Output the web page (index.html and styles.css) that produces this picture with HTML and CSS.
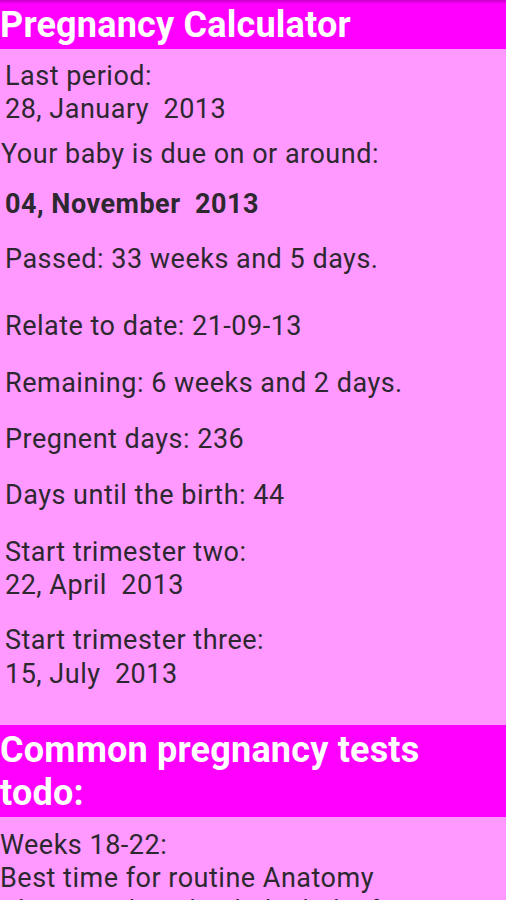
FILE: index.html
```html
<!DOCTYPE html>
<html lang="en">
<head>
    <meta charset="UTF-8">
    <meta name="viewport" content="width=device-width, initial-scale=1.0">
    <title>Pregnancy Calculator</title>
    <link rel="stylesheet" href="styles.css">
</head>
<body>
<div class="title-bar">Pregnancy Calculator</div>
<div class="content">
    <div class="block period">
        <div>Last period:</div>
        <div class="date">28, January  2013</div>
    </div>
    <div class="due-label">Your baby is due on or around:</div>
    <div class="block due-date">04, November  2013</div>
    <div class="block passed">Passed: 33 weeks and 5 days.</div>
    <div class="block relate">Relate to date: 21-09-13</div>
    <div class="block stat">Remaining: 6 weeks and 2 days.</div>
    <div class="block stat">Pregnent days: 236</div>
    <div class="block stat">Days until the birth: 44</div>
    <div class="block stat">
        <div>Start trimester two:</div>
        <div class="date">22, April  2013</div>
    </div>
    <div class="block trimester">
        <div>Start trimester three:</div>
        <div class="date">15, July  2013</div>
    </div>
</div>
<div class="section-bar">Common pregnancy tests todo:</div>
<div class="tests">
    <div>Weeks 18-22:</div>
    <div>Best time for routine Anatomy Ultrasound to check the baby for any abnormalities.</div>
</div>
</body>
</html>
```

FILE: styles.css
```css
* {
    margin: 0;
    padding: 0;
    box-sizing: border-box;
}
html, body {
    height: 100%;
}
body {
    background: #ff99ff;
    color: #2d2830;
    font-family: Roboto, "Noto Sans", sans-serif;
    font-size: 27px;
    line-height: 33.3px;
    letter-spacing: 0.5px;
    overflow: hidden;
}
.title-bar {
    background: linear-gradient(#c800c8, #ff00ff 4px);
    color: white;
    font-size: 36px;
    font-weight: bold;
    letter-spacing: 0.2px;
    line-height: 48px;
    height: 49px;
    padding-top: 1px;
}
.content {
    padding-top: 11px;
}
.block {
    padding-left: 5px;
}
.date {
    white-space: pre;
}
.due-label {
    margin-top: 11px;
    padding-left: 1px;
}
.due-date {
    margin-top: 17px;
    font-weight: bold;
    white-space: pre;
}
.passed {
    margin-top: 22px;
}
.relate {
    margin-top: 34px;
}
.stat {
    margin-top: 23px;
}
.trimester {
    margin-top: 22px;
}
.section-bar {
    margin-top: 34px;
    background: #ff00ff;
    color: white;
    font-size: 36px;
    font-weight: bold;
    letter-spacing: 0.2px;
    line-height: 43px;
    padding: 4px 0 2px 0;
}
.tests {
    margin-top: 12px;
    line-height: 33px;
}
```
